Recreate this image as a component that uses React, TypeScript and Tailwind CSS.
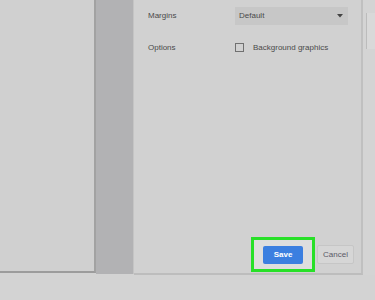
export default function App() {
  return (
    <div className="flex h-[300px] w-[375px] flex-col overflow-hidden bg-[#d3d3d3] font-['Liberation_Sans',Arial,sans-serif] text-[#4a4a4a]">
      <div className="flex h-[275px]">
        {/* page preview */}
        <div className="h-[273px] w-[96px] border-b-2 border-r-2 border-b-[#9c9c9c] border-r-[#a2a2a2] bg-[#d0d0d0]" />

        {/* preview gutter */}
        <div className="h-[274px] w-[38px] border-r border-r-[#c4c4c4] bg-[#b2b2b4]" />

        {/* settings panel */}
        <div className="relative flex h-[275px] w-[229px] flex-col border-b-2 border-r-2 border-b-[#bdbdbd] border-r-[#c0c0c0] bg-[#d1d1d1]">
          <div className="mt-[7px] flex items-center">
            <span className="w-[101px] pl-[14px] text-[8px] leading-none">Margins</span>
            <div className="flex h-[18px] w-[113px] items-center justify-between bg-[#c7c7c7] pl-[4px] pr-[5px]">
              <span className="text-[8px] leading-none">Default</span>
              <svg width="6" height="4" viewBox="0 0 6 4">
                <path d="M0 0h6L3 3.5z" fill="#444" />
              </svg>
            </div>
          </div>

          <div className="mt-[18px] flex items-center">
            <span className="w-[101px] pl-[14px] text-[8px] leading-none">Options</span>
            <div className="flex items-center gap-[9px]">
              <span className="block h-[9px] w-[9px] border border-[#707070]" />
              <span className="text-[8px] leading-none">Background graphics</span>
            </div>
          </div>

          <div className="mt-auto mb-[1px] flex items-center justify-end pr-[7px]">
            <div className="flex h-[35px] w-[64px] items-center justify-center border-[3px] border-[#28e028] bg-[#dedede]">
              <div className="flex h-[18px] w-[40px] items-center justify-center rounded-[2px] bg-[#3b7fe0] text-[8px] font-bold text-white">
                Save
              </div>
            </div>
            <div className="ml-[2px] flex h-[19px] w-[37px] items-center justify-center rounded-[2px] border border-[#c6c6c6] bg-[#d6d6d6] text-[8px] text-[#5a5a66]">
              Cancel
            </div>
          </div>
        </div>

        {/* scrollbar edge */}
        <div className="flex-1 bg-[#d4d4d4] pt-[13px]">
          <div className="ml-[3px] h-[36px] w-[9px] border-l border-[#bcbcbc] bg-[#d9d9d9]" />
        </div>
      </div>
    </div>
  );
}
